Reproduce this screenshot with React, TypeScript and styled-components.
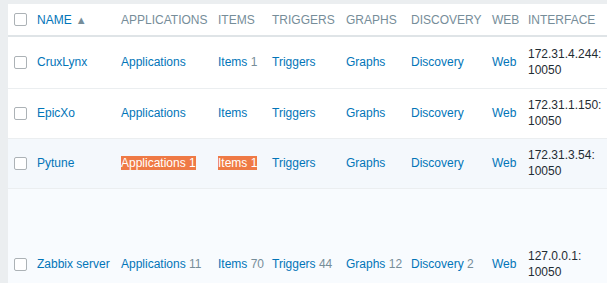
import React from "react";
import styled, { createGlobalStyle } from "styled-components";

const Global = createGlobalStyle`
  html, body { margin: 0; padding: 0; overflow: hidden; }
  body {
    background: #ebeef0;
    font-family: "Liberation Sans", Arial, sans-serif;
    font-size: 12px;
  }
`;

const Page = styled.div`
  padding: 4px 0 0 8px;
  width: 700px;
`;

const Table = styled.table`
  background: #ffffff;
  border-collapse: collapse;
  table-layout: fixed;
  width: 613px;
  line-height: 16px;
`;

const HeadCell = styled.th<{ $first?: boolean }>`
  height: 31px;
  padding: 0 5px 0 ${(p) => (p.$first ? "6px" : "5px")};
  text-align: left;
  font-weight: normal;
  color: #768d99;
  text-transform: uppercase;
  white-space: nowrap;
  vertical-align: middle;
  border-bottom: 2px solid #dfe4e7;
`;

const Row = styled.tr<{ $bg?: string; $h: number }>`
  background: ${(p) => p.$bg ?? "#ffffff"};
  height: ${(p) => p.$h}px;
  border-bottom: 1px solid #ebeef0;
`;

const Cell = styled.td<{ $first?: boolean }>`
  padding: 0 5px 0 ${(p) => (p.$first ? "6px" : "5px")};
  vertical-align: middle;
  color: #1f2c33;
  white-space: ${(p) => (p.$first ? "nowrap" : "normal")};
`;

const Check = styled.span`
  display: block;
  box-sizing: border-box;
  width: 13px;
  height: 13px;
  border: 1px solid #acb2b6;
  border-radius: 2px;
  background: #fff;
`;

const Link = styled.a<{ $hl?: boolean }>`
  color: ${(p) => (p.$hl ? "#ffffff" : "#0275b8")};
  background: ${(p) => (p.$hl ? "#ef7a45" : "transparent")};
  text-decoration: none;
  white-space: nowrap;
  cursor: pointer;
`;

const Count = styled.sup<{ $hl?: boolean }>`
  vertical-align: baseline;
  font-size: 12px;
  color: ${(p) => (p.$hl ? "#ffffff" : "#768d99")};
`;

const SortLink = styled.span`
  color: #0275b8;
`;

const Arrow = styled.span`
  color: #768d99;
  font-size: 11px;
  margin-left: 4px;
`;

const Col = styled.col<{ $w: number }>`
  width: ${(p) => p.$w}px;
`;

type Host = {
  name: string;
  apps?: number;
  items?: number;
  triggers?: number;
  graphs?: number;
  discovery?: number;
  iface: string;
  hl?: boolean;
  bg?: string;
  h: number;
};

const hosts: Host[] = [
  { name: "CruxLynx", items: 1, iface: "172.31.4.244: 10050", h: 52 },
  { name: "EpicXo", iface: "172.31.1.150: 10050", h: 50 },
  { name: "Pytune", apps: 1, items: 1, iface: "172.31.3.54: 10050", hl: true, bg: "#f4f8fc", h: 50 },
  {
    name: "Zabbix server",
    apps: 11,
    items: 70,
    triggers: 44,
    graphs: 12,
    discovery: 2,
    iface: "127.0.0.1: 10050",
    bg: "#f8fbfe",
    h: 152,
  },
];

const LinkWithCount = ({ label, n, hl }: { label: string; n?: number; hl?: boolean }) => (
  <Link $hl={hl}>
    {label}
    {n !== undefined && <Count $hl={hl}> {n}</Count>}
  </Link>
);

export default function App() {
  return (
    <Page>
      <Global />
      <Table>
        <colgroup>
          <Col $w={24} />
          <Col $w={84} />
          <Col $w={97} />
          <Col $w={54} />
          <Col $w={74} />
          <Col $w={65} />
          <Col $w={81} />
          <Col $w={36} />
          <Col $w={98} />
        </colgroup>
        <thead>
          <tr>
            <HeadCell $first>
              <Check />
            </HeadCell>
            <HeadCell>
              <SortLink>Name</SortLink>
              <Arrow>▲</Arrow>
            </HeadCell>
            <HeadCell>Applications</HeadCell>
            <HeadCell>Items</HeadCell>
            <HeadCell>Triggers</HeadCell>
            <HeadCell>Graphs</HeadCell>
            <HeadCell>Discovery</HeadCell>
            <HeadCell>Web</HeadCell>
            <HeadCell>Interface</HeadCell>
          </tr>
        </thead>
        <tbody>
          {hosts.map((h) => (
            <Row key={h.name} $bg={h.bg} $h={h.h}>
              <Cell $first>
                <Check />
              </Cell>
              <Cell>
                <Link>{h.name}</Link>
              </Cell>
              <Cell>
                <LinkWithCount label="Applications" n={h.apps} hl={h.hl} />
              </Cell>
              <Cell>
                <LinkWithCount label="Items" n={h.items} hl={h.hl} />
              </Cell>
              <Cell>
                <LinkWithCount label="Triggers" n={h.triggers} />
              </Cell>
              <Cell>
                <LinkWithCount label="Graphs" n={h.graphs} />
              </Cell>
              <Cell>
                <LinkWithCount label="Discovery" n={h.discovery} />
              </Cell>
              <Cell>
                <Link>Web</Link>
              </Cell>
              <Cell>{h.iface}</Cell>
            </Row>
          ))}
        </tbody>
      </Table>
    </Page>
  );
}
